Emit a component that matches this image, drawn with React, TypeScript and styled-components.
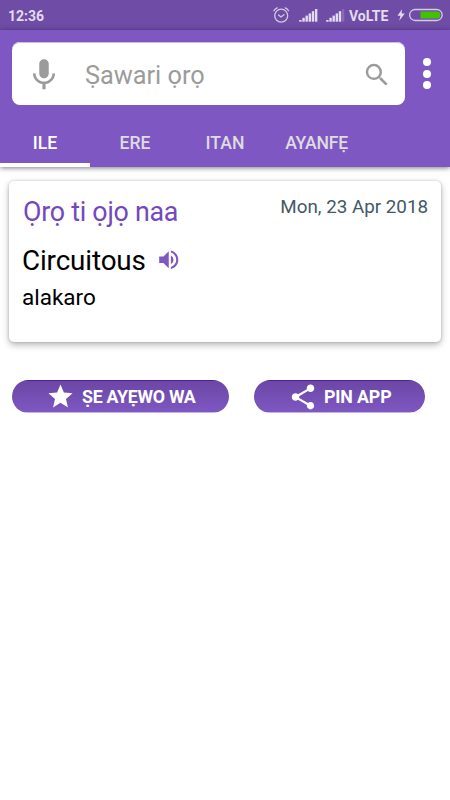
import React from "react";
import styled, { createGlobalStyle } from "styled-components";
import { MdMic, MdSearch, MdVolumeUp, MdStar, MdShare } from "react-icons/md";

const GlobalStyle = createGlobalStyle`
  * { box-sizing: border-box; }
  body { margin: 0; background: #fff; font-family: Roboto, "Noto Sans", sans-serif; }
  svg { display: block; flex: none; }
`;

const Screen = styled.div`
  width: 450px;
  height: 800px;
  overflow: hidden;
  background: #fff;
`;

const StatusBar = styled.div`
  height: 30px;
  display: flex;
  align-items: center;
  justify-content: space-between;
  padding: 0 7px 0 8px;
  background: #6f4ca5;
  color: #e3dbef;
  font-size: 14px;
  line-height: 20px;
`;

const Clock = styled.span`
  padding-top: 1px;
  font-weight: 700;
`;

const StatusIcons = styled.div`
  display: flex;
  align-items: center;
`;

const NetworkLabel = styled.span`
  width: 41px;
  margin: 1px 7px 0 4px;
  font-weight: 700;
  white-space: nowrap;
`;

const Header = styled.header`
  height: 137px;
  background: #7e57c2;
  box-shadow: 0 1px 5px rgba(0, 0, 0, 0.5);
`;

const SearchRow = styled.div`
  display: flex;
  align-items: center;
  padding: 12px 14px 0 12px;
`;

const SearchBox = styled.div`
  width: 393px;
  height: 63px;
  display: flex;
  align-items: center;
  padding: 2px 13px 0 13px;
  border-radius: 8px;
  background: #fff;
  color: #9b9b9b;
  box-shadow: inset 0 1px 0 #cbbce6;
`;

const Placeholder = styled.span`
  flex: 1;
  margin-left: 22px;
  padding-top: 2px;
  font-size: 25.3px;
  line-height: 30px;
`;

const MenuButton = styled.div`
  display: flex;
  flex-direction: column;
  gap: 3.2px;
  margin-left: 18px;
`;

const Dot = styled.i`
  width: 8px;
  height: 8px;
  border-radius: 50%;
  background: #fff;
`;

const Tabs = styled.nav`
  display: flex;
  height: 62px;
`;

const Tab = styled.div<{ $active?: boolean; $tight?: boolean }>`
  width: 90px;
  padding: 28px 0 0 ${(p) => (p.$tight ? "3px" : "0")};
  text-align: center;
  font-size: 17.6px;
  line-height: 20px;
  font-weight: 500;
  letter-spacing: ${(p) => (p.$tight ? "-0.25px" : "0")};
  color: ${(p) => (p.$active ? "#fff" : "#dedce1")};
  border-bottom: ${(p) => (p.$active ? "4px solid #fff" : "0")};
`;

const Card = styled.section`
  width: 432px;
  height: 161px;
  margin: 14px 0 0 9px;
  padding: 0 13px;
  border-radius: 5px;
  background: #fff;
  box-shadow: 0 3px 7px rgba(0, 0, 0, 0.28), 0 0 3px rgba(0, 0, 0, 0.18);
`;

const CardHeader = styled.div`
  display: flex;
  justify-content: space-between;
  height: 62px;
`;

const CardTitle = styled.h1`
  margin: 15px 0 0 1px;
  font-size: 26.8px;
  line-height: 32px;
  font-weight: 400;
  letter-spacing: -0.25px;
  color: #7348bd;
`;

const DateLabel = styled.time`
  margin-top: 14px;
  font-size: 18.8px;
  line-height: 24px;
  color: #425967;
`;

const WordRow = styled.div`
  display: flex;
  align-items: center;
  height: 36px;
  color: #7e57c2;
`;

const Word = styled.span`
  margin-right: 10px;
  font-size: 27.8px;
  line-height: 34px;
  letter-spacing: -0.12px;
  color: #000;
`;

const SpeakerIcon = styled(MdVolumeUp)`
  margin-top: -2px;
`;

const Meaning = styled.p`
  margin: 5px 0 0;
  font-size: 22.5px;
  line-height: 26px;
  color: #000;
`;

const Actions = styled.div`
  display: flex;
  gap: 25px;
  margin: 38px 0 0 12px;
`;

const ActionButton = styled.div<{ $width: number; $gap: number; $spacing: number }>`
  width: ${(p) => p.$width}px;
  height: 33px;
  display: flex;
  align-items: center;
  padding-left: 34px;
  gap: ${(p) => p.$gap}px;
  border-radius: 17px;
  background: linear-gradient(#4f1f95 0 1px, #6b47a5 1px, #7e57c2 calc(100% - 1px), #c5b2e5 calc(100% - 1px));
  color: #fff;
  font-size: 17.8px;
  line-height: 24px;
  letter-spacing: ${(p) => p.$spacing}px;
  font-weight: 700;
  white-space: nowrap;
`;

const ButtonLabel = styled.span`
  padding-top: 1px;
`;

const AlarmIcon = () => (
  <svg width="17" height="17" viewBox="0 0 17 17" fill="none" stroke="#d5cae5" strokeWidth="1.3" strokeLinecap="round">
    <circle cx="8.2" cy="8.7" r="6.5" />
    <path d="M5.6 7.9 8 10 11 7.7" />
    <path d="M0.9 3.7Q2 1.5 4.2 0.8M15.5 3.7Q14.5 1.5 12.2 0.8" />
  </svg>
);

const bars = [0, 1, 2, 3, 4, 5];

const SignalIcon = ({ level }: { level: number }) => (
  <svg width="19" height="14" viewBox="0 0 19 14" fill="#e3dbef">
    {bars.map((i) => (
      <rect
        key={i}
        x={0.2 + i * 3.15}
        y={12 - i * 2.2}
        width="2.4"
        height={1.7 + i * 2.2}
        opacity={i < level ? 1 : 0.22}
      />
    ))}
  </svg>
);

const BatteryIcon = () => (
  <svg width="46" height="14" viewBox="0 0 46 14">
    <path d="M5 1.2 0.5 7.8H3.5L2.2 12.8 7.8 5.6H4.6Z" fill="#e3dbef" />
    <rect x="12.6" y="1.5" width="32.6" height="11" rx="5.5" fill="none" stroke="#d5cae5" strokeWidth="1.3" />
    <path d="M23.5 3.6H39.9a3.5 3.5 0 0 1 0 7H23.5Z" fill="#43c100" />
  </svg>
);

const SignalGroup = styled.div`
  display: flex;
  gap: 8px;
  margin-left: 9px;
`;

export default function App() {
  return (
    <Screen>
      <GlobalStyle />
      <StatusBar>
        <Clock>12:36</Clock>
        <StatusIcons>
          <AlarmIcon />
          <SignalGroup>
            <SignalIcon level={6} />
            <SignalIcon level={5} />
          </SignalGroup>
          <NetworkLabel>VoLTE</NetworkLabel>
          <BatteryIcon />
        </StatusIcons>
      </StatusBar>
      <Header>
        <SearchRow>
          <SearchBox>
            <MdMic size={38} />
            <Placeholder>Ṣawari ọrọ</Placeholder>
            <MdSearch size={30} />
          </SearchBox>
          <MenuButton>
            <Dot />
            <Dot />
            <Dot />
          </MenuButton>
        </SearchRow>
        <Tabs>
          <Tab $active>ILE</Tab>
          <Tab>ERE</Tab>
          <Tab>ITAN</Tab>
          <Tab $tight>AYANFẸ</Tab>
        </Tabs>
      </Header>
      <Card>
        <CardHeader>
          <CardTitle>Ọrọ ti ọjọ naa</CardTitle>
          <DateLabel>Mon, 23 Apr 2018</DateLabel>
        </CardHeader>
        <WordRow>
          <Word>Circuitous</Word>
          <SpeakerIcon size={25.5} />
        </WordRow>
        <Meaning>alakaro</Meaning>
      </Card>
      <Actions>
        <ActionButton $width={217} $gap={7} $spacing={-0.28}>
          <MdStar size={29} />
          <ButtonLabel>ṢE AYẸWO WA</ButtonLabel>
        </ActionButton>
        <ActionButton $width={171} $gap={6} $spacing={-0.15}>
          <MdShare size={30} />
          <ButtonLabel>PIN APP</ButtonLabel>
        </ActionButton>
      </Actions>
    </Screen>
  );
}
